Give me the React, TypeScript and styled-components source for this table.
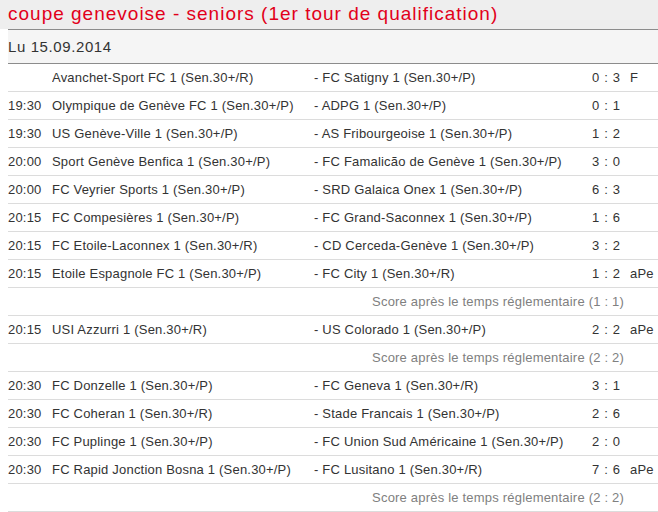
import React from "react";
import styled, { createGlobalStyle } from "styled-components";

const Global = createGlobalStyle`
  html, body { margin: 0; padding: 0; background: #ffffff; }
  body { font-family: "Liberation Sans", Arial, sans-serif; }
`;

const Page = styled.div`
  width: 658px;
  overflow: hidden;
`;

const Title = styled.h1`
  margin: 0;
  height: 29px;
  box-sizing: border-box;
  padding: 3px 0 0 8px;
  background: #eeeeee;
  color: #e2001a;
  font-size: 19px;
  letter-spacing: 1px;
  font-weight: normal;
  line-height: 22px;
  white-space: nowrap;
`;

const Body = styled.div`
  margin-left: 8px;
  width: 650px;
`;

const DateBar = styled.div`
  height: 35px;
  box-sizing: border-box;
  border-top: 1px solid #8c8c8c;
  border-bottom: 1px solid #8c8c8c;
  background: #f5f5f5;
  color: #333;
  font-size: 15px;
  letter-spacing: 0.6px;
  line-height: 33px;
`;

const Row = styled.div`
  display: grid;
  grid-template-columns: 44px 262px 278px 38px 28px;
  height: 28px;
  box-sizing: border-box;
  border-bottom: 1px solid #dcdcdc;
  align-items: center;
  font-size: 13px;
  letter-spacing: 0.2px;
  color: #333;
  white-space: nowrap;
`;

const Cell = styled.span`
  overflow: hidden;
`;

const Score = styled.span`
  overflow: hidden;
  word-spacing: 1px;
`;

const Note = styled.div`
  height: 28px;
  box-sizing: border-box;
  border-bottom: 1px solid #dcdcdc;
  font-size: 13px;
  letter-spacing: 0.2px;
  line-height: 27px;
  color: #808080;
  text-align: right;
  padding-right: 34px;
  white-space: nowrap;
`;

type Match = {
  time: string;
  home: string;
  away: string;
  score: string;
  extra?: string;
  note?: string;
};

const matches: Match[] = [
  { time: "", home: "Avanchet-Sport FC 1 (Sen.30+/R)", away: "FC Satigny 1 (Sen.30+/P)", score: "0 : 3", extra: "F" },
  { time: "19:30", home: "Olympique de Genève FC 1 (Sen.30+/P)", away: "ADPG 1 (Sen.30+/P)", score: "0 : 1" },
  { time: "19:30", home: "US Genève-Ville 1 (Sen.30+/P)", away: "AS Fribourgeoise 1 (Sen.30+/P)", score: "1 : 2" },
  { time: "20:00", home: "Sport Genève Benfica 1 (Sen.30+/P)", away: "FC Famalicão de Genève 1 (Sen.30+/P)", score: "3 : 0" },
  { time: "20:00", home: "FC Veyrier Sports 1 (Sen.30+/P)", away: "SRD Galaica Onex 1 (Sen.30+/P)", score: "6 : 3" },
  { time: "20:15", home: "FC Compesières 1 (Sen.30+/P)", away: "FC Grand-Saconnex 1 (Sen.30+/P)", score: "1 : 6" },
  { time: "20:15", home: "FC Etoile-Laconnex 1 (Sen.30+/R)", away: "CD Cerceda-Genève 1 (Sen.30+/P)", score: "3 : 2" },
  { time: "20:15", home: "Etoile Espagnole FC 1 (Sen.30+/P)", away: "FC City 1 (Sen.30+/R)", score: "1 : 2", extra: "aPe", note: "(1 : 1)" },
  { time: "20:15", home: "USI Azzurri 1 (Sen.30+/R)", away: "US Colorado 1 (Sen.30+/P)", score: "2 : 2", extra: "aPe", note: "(2 : 2)" },
  { time: "20:30", home: "FC Donzelle 1 (Sen.30+/P)", away: "FC Geneva 1 (Sen.30+/R)", score: "3 : 1" },
  { time: "20:30", home: "FC Coheran 1 (Sen.30+/R)", away: "Stade Francais 1 (Sen.30+/P)", score: "2 : 6" },
  { time: "20:30", home: "FC Puplinge 1 (Sen.30+/P)", away: "FC Union Sud Américaine 1 (Sen.30+/P)", score: "2 : 0" },
  { time: "20:30", home: "FC Rapid Jonction Bosna 1 (Sen.30+/P)", away: "FC Lusitano 1 (Sen.30+/R)", score: "7 : 6", extra: "aPe", note: "(2 : 2)" },
];

export default function App() {
  return (
    <Page>
      <Global />
      <Title>coupe genevoise - seniors (1er tour de qualification)</Title>
      <Body>
        <DateBar>Lu 15.09.2014</DateBar>
        {matches.map((m, i) => (
          <React.Fragment key={i}>
            <Row>
              <Cell>{m.time}</Cell>
              <Cell>{m.home}</Cell>
              <Cell>- {m.away}</Cell>
              <Score>{m.score}</Score>
              <Cell>{m.extra ?? ""}</Cell>
            </Row>
            {m.note && <Note>Score après le temps réglementaire {m.note}</Note>}
          </React.Fragment>
        ))}
      </Body>
    </Page>
  );
}
